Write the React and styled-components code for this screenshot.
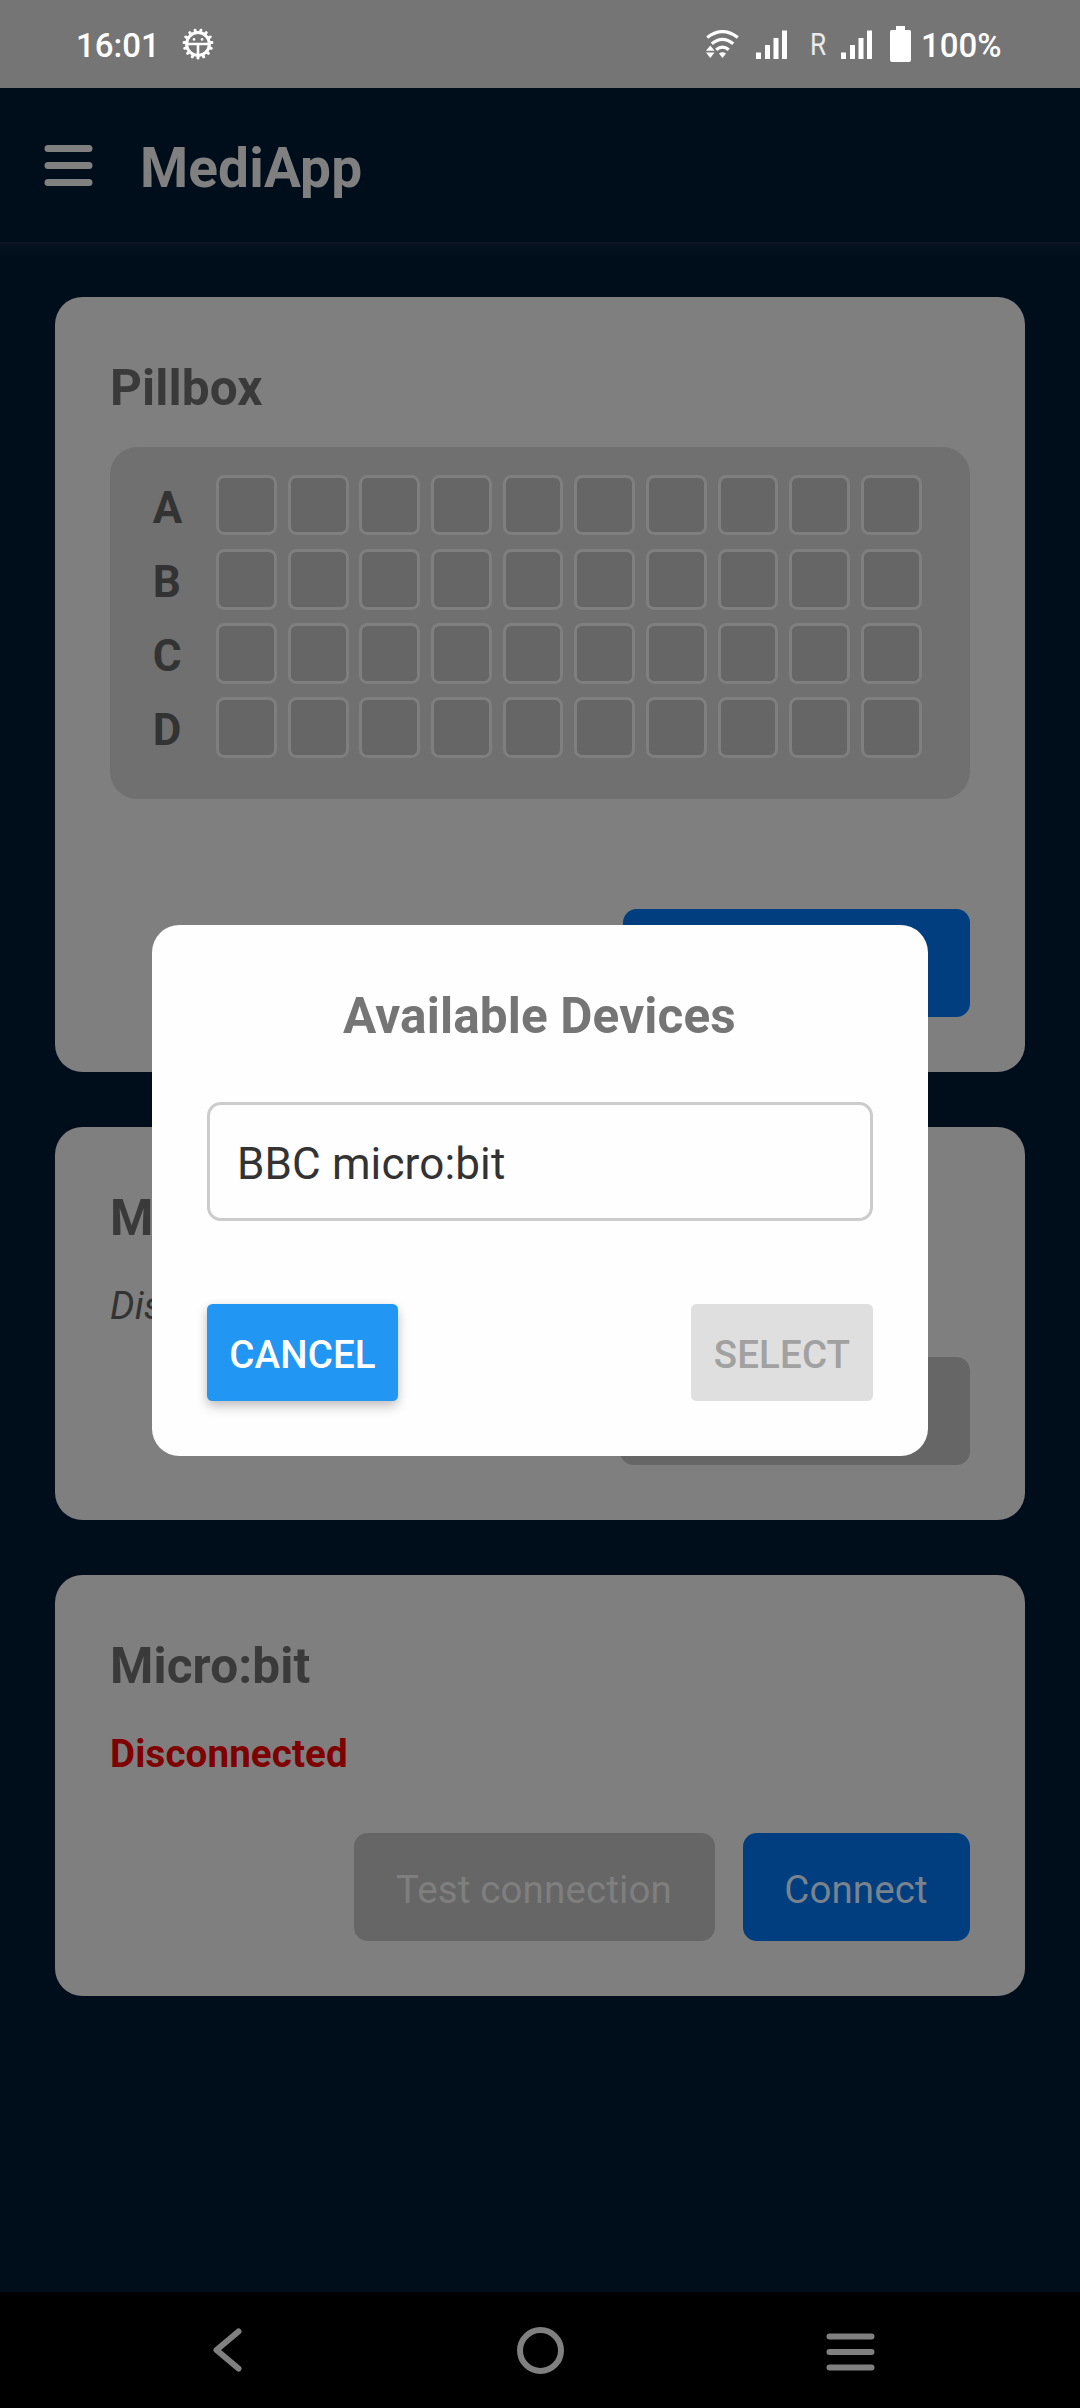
import React from "react";
import styled, { createGlobalStyle } from "styled-components";

const GlobalStyle = createGlobalStyle`
  *, *::before, *::after { box-sizing: border-box; }
  html, body { margin: 0; padding: 0; background: #000; }
  body { font-family: Roboto, "Liberation Sans", sans-serif; letter-spacing: 0.13px; }
  button { font-family: inherit; letter-spacing: inherit; border: 0; padding: 0; margin: 0; }
`;

const Screen = styled.div`
  position: relative;
  width: 1080px;
  height: 2408px;
  display: flex;
  flex-direction: column;
  overflow: hidden;
  background: #000d1b;
`;

const StatusBar = styled.header`
  flex: none;
  height: 88px;
  padding: 0 77px 0 76px;
  display: flex;
  align-items: center;
  justify-content: space-between;
  background: #757575;
  color: #fff;
`;

const StatusGroup = styled.div`
  display: flex;
  align-items: center;
`;

const StatusText = styled.span`
  width: ${(p) => p.$width}px;
  font-size: 33px;
  font-weight: 500;
  line-height: 40px;
  padding-top: 3px;
  letter-spacing: 0;
  white-space: nowrap;
  margin-left: ${(p) => p.$left || 0}px;
`;

const Roaming = styled.span`
  font-size: 32px;
  line-height: 36px;
  margin: 0 16px 0 23px;
  transform: scaleX(0.82);
  transform-origin: left center;
  width: 15px;
  opacity: 0.85;
`;

const StatusIcon = styled.svg`
  display: block;
  margin-left: ${(p) => p.$left || 0}px;
`;

const AppBar = styled.div`
  flex: none;
  height: 154px;
  padding: 0 44px;
  display: flex;
  align-items: center;
`;

const MenuIcon = styled.svg`
  display: block;
`;

const AppTitle = styled.h1`
  margin: 6px 0 0 47px;
  font-size: 55px;
  font-weight: 700;
  line-height: 64px;
  color: #808080;
`;

const Content = styled.main`
  flex: 1;
  padding: 55px;
  display: flex;
  flex-direction: column;
  gap: 55px;
  background: linear-gradient(#0b1624 0, #03101d 6px, #000d1b 16px);
`;

const Card = styled.section`
  padding: 55px;
  border-radius: 27.5px;
  background: #7f7f7f;
`;

const CardTitle = styled.h2`
  margin: 0;
  height: 67px;
  font-size: 49.5px;
  font-weight: 700;
  line-height: 72px;
  color: #3a3a3a;
`;

const CardStatus = styled.p`
  margin: 29px 0 0;
  height: 52px;
  font-size: 38.5px;
  line-height: 56px;
  color: ${(p) => (p.$error ? "#7f0000" : "#333")};
  font-weight: ${(p) => (p.$error ? 700 : 400)};
  font-style: ${(p) => (p.$error ? "normal" : "italic")};
`;

const Box = styled.div`
  margin-top: 28px;
  height: 352px;
  padding: 27.5px 48.5px 27.5px 42.8px;
  border-radius: 27.5px;
  background: #707070;
`;

const BoxRow = styled.div`
  height: 74.25px;
  display: flex;
  align-items: flex-start;
`;

const RowLabel = styled.span`
  width: 63.4px;
  height: 60.5px;
  font-size: 44px;
  font-weight: 700;
  line-height: 67px;
  color: #333;
`;

const Compartments = styled.div`
  flex: 1;
  display: grid;
  grid-template-columns: repeat(10, 1fr);
  column-gap: 10.95px;
`;

const Compartment = styled.div`
  height: 60.8px;
  border: 3px solid #7f7f7f;
  border-radius: 8.25px;
  background: #666;
`;

const Actions = styled.div`
  display: flex;
  justify-content: flex-end;
  gap: 28px;
  margin-top: ${(p) => p.$top}px;
`;

const ActionButton = styled.button`
  height: 108px;
  width: ${(p) => p.$width}px;
  border-radius: 13.75px;
  font-size: 38.5px;
  line-height: 56px;
  padding: 5px 1px 0 0;
  white-space: nowrap;
  color: ${(p) => (p.$primary ? "#7a828b" : "#7f7f7f")};
  background: ${(p) => (p.$primary ? "#003e7f" : "#666")};
`;

const NavBar = styled.nav`
  flex: none;
  height: 116px;
  padding: 0 205px 0 212px;
  display: flex;
  align-items: center;
  background: #000;
`;

const NavIcon = styled.svg`
  display: block;
  flex: none;
  margin: ${(p) => p.$top || 0}px 0 0 ${(p) => p.$left || 0}px;
`;

const Overlay = styled.div`
  position: absolute;
  inset: 0;
  padding-top: 925px;
  display: flex;
  justify-content: center;
  align-items: flex-start;
`;

const Dialog = styled.div`
  width: 776px;
  height: 531px;
  padding: 55px;
  border-radius: 27.5px;
  background: #fefefe;
`;

const DialogTitle = styled.h2`
  margin: 0;
  height: 67px;
  padding-right: 1px;
  font-size: 49.5px;
  font-weight: 700;
  line-height: 72px;
  text-align: center;
  color: #757575;
`;

const DeviceItem = styled.div`
  margin-top: 55px;
  height: 119px;
  padding: 0 27px;
  border: 3px solid #ccc;
  border-radius: 13.75px;
  font-size: 44px;
  line-height: 119px;
  color: #333;
`;

const DialogActions = styled.div`
  margin-top: 83px;
  display: flex;
  justify-content: space-between;
`;

const DialogButton = styled.button`
  height: 97px;
  width: ${(p) => (p.disabled ? 182 : 191)}px;
  padding-top: 4px;
  border-radius: 5.5px;
  font-size: 38.5px;
  font-weight: 500;
  line-height: 45px;
  color: ${(p) => (p.disabled ? "#a1a1a1" : "#fff")};
  background: ${(p) => (p.disabled ? "#dfdfdf" : "#2196f3")};
  box-shadow: ${(p) =>
    p.disabled ? "none" : "0 6px 12px rgba(0,0,0,0.2), 0 1px 8px rgba(0,0,0,0.08)"};
`;

const ROWS = ["A", "B", "C", "D"];
const COLUMNS = Array.from({ length: 10 }, (_, i) => i);
const TEETH = Array.from({ length: 15 }, (_, i) => i * 24);

function GearFace() {
  return (
    <StatusIcon $left={21} width="32" height="32" viewBox="-16 -16 32 32" fill="none" stroke="#fff">
      <circle r="11.4" strokeWidth="3" />
      {TEETH.map((a) => (
        <path key={a} d="M0 11.5V14" strokeWidth="3" strokeLinecap="round" transform={`rotate(${a})`} />
      ))}
      <path d="M-11 0H11M0 0V12" strokeWidth="2.6" />
      <circle cx="-4" cy="-4.6" r="1.3" fill="#fff" stroke="none" />
      <circle cx="4" cy="-4.6" r="1.3" fill="#fff" stroke="none" />
    </StatusIcon>
  );
}

function Wifi() {
  return (
    <StatusIcon width="34" height="29" viewBox="0 0 34 29" fill="none" stroke="#fff" strokeWidth="3.2">
      <path d="M1.2 7.5Q16.5 -4.300 31.800 7.500" />
      <path d="M5.800 13.800Q16.500 5 27.200 13.800" />
      <path d="M10.200 19.800Q16.500 14.500 22.800 19.800" />
      <path d="M13 23.500Q16.500 21 20 23.500L16.500 28Z" fill="#fff" stroke="none" />
      <path d="M4.300 15.500L8.500 20.800H0ZM0 22.500H8.500L4.300 28Z" fill="#fff" stroke="none" />
    </StatusIcon>
  );
}

function Signal({ left }) {
  return (
    <StatusIcon $left={left} width="31" height="29" viewBox="0 0 31 29" fill="#fff">
      <path d="M0 22.500H5V29H0ZM9 15H14V29H9ZM17.500 8H22.500V29H17.500ZM26 0.500H31V29H26Z" />
    </StatusIcon>
  );
}

function Battery() {
  return (
    <StatusIcon $left={18} width="21" height="36" viewBox="0 0 21 36" fill="#fff">
      <path d="M6 0H15V4H19.500Q21 4 21 6V34Q21 36 19 36H2Q0 36 0 34V6Q0 4 1.500 4H6Z" />
    </StatusIcon>
  );
}

export default function App() {
  return (
    <>
      <GlobalStyle />
      <Screen>
        <StatusBar>
          <StatusGroup>
            <StatusText $width={85}>16:01</StatusText>
            <GearFace />
          </StatusGroup>
          <StatusGroup>
            <Wifi />
            <Signal left={16} />
            <Roaming>R</Roaming>
            <Signal left={0} />
            <Battery />
            <StatusText $left={10} $width={82}>100%</StatusText>
          </StatusGroup>
        </StatusBar>
        <AppBar>
          <MenuIcon width="49" height="41" viewBox="0 0 49 41" stroke="#808080" strokeWidth="7" strokeLinecap="round">
            <path d="M4 3.500H45M4 20.500H45M4 37.500H45" />
          </MenuIcon>
          <AppTitle>MediApp</AppTitle>
        </AppBar>
        <Content>
          <Card>
            <CardTitle>Pillbox</CardTitle>
            <Box>
              {ROWS.map((row) => (
                <BoxRow key={row}>
                  <RowLabel>{row}</RowLabel>
                  <Compartments>
                    {COLUMNS.map((c) => (
                      <Compartment key={c} />
                    ))}
                  </Compartments>
                </BoxRow>
              ))}
            </Box>
            <Actions $top={110}>
              <ActionButton $primary $width={347} />
            </Actions>
          </Card>
          <Card>
            <CardTitle>M</CardTitle>
            <CardStatus>Dis</CardStatus>
            <Actions $top={27}>
              <ActionButton $width={350} />
            </Actions>
          </Card>
          <Card>
            <CardTitle>Micro:bit</CardTitle>
            <CardStatus $error>Disconnected</CardStatus>
            <Actions $top={55}>
              <ActionButton $width={361}>Test connection</ActionButton>
              <ActionButton $primary $width={227}>Connect</ActionButton>
            </Actions>
          </Card>
        </Content>
        <NavBar>
          <NavIcon width="31" height="44" viewBox="0 0 31 44" fill="none" stroke="#808080" strokeWidth="6" strokeLinecap="round" strokeLinejoin="round">
            <path d="M26.500 3.500L4.500 22L26.500 40.500" />
          </NavIcon>
          <NavIcon $left={274} width="47" height="47" viewBox="0 0 47 47" fill="none" stroke="#808080" strokeWidth="6">
            <circle cx="23.500" cy="23.500" r="20.500" />
          </NavIcon>
          <NavIcon $left={262} $top={3} width="49" height="38" viewBox="0 0 49 38" stroke="#808080" strokeWidth="6" strokeLinecap="round">
            <path d="M3.500 3.500H45.500M3.500 19H45.500M3.500 34.500H45.500" />
          </NavIcon>
        </NavBar>
        <Overlay>
          <Dialog role="dialog">
            <DialogTitle>Available Devices</DialogTitle>
            <DeviceItem>BBC micro:bit</DeviceItem>
            <DialogActions>
              <DialogButton>CANCEL</DialogButton>
              <DialogButton disabled>SELECT</DialogButton>
            </DialogActions>
          </Dialog>
        </Overlay>
      </Screen>
    </>
  );
}
